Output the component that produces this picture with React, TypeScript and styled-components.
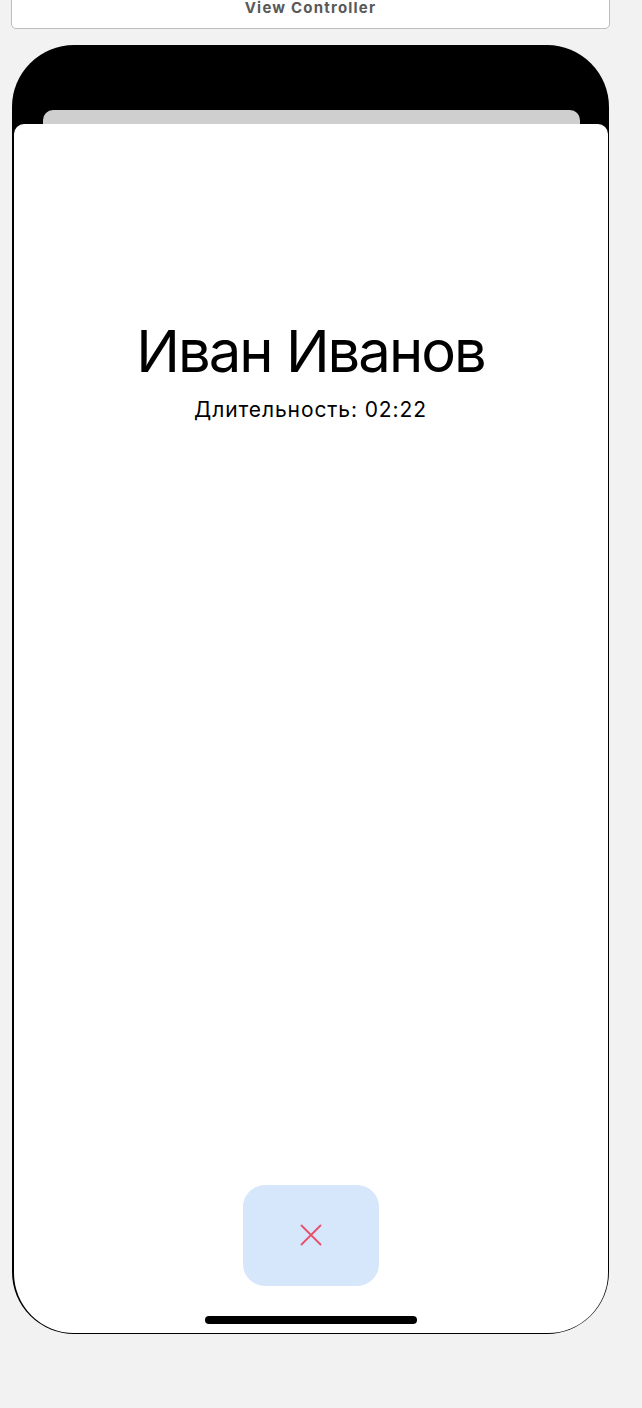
import React from "react";
import styled, { createGlobalStyle } from "styled-components";

const Global = createGlobalStyle`
  html, body { margin: 0; padding: 0; background: #f2f2f2; }
  body { font-family: Inter, "Noto Sans", sans-serif; }
`;

const Page = styled.div`
  width: 642px;
  height: 1408px;
  padding-left: 11px;
  box-sizing: border-box;
  display: flex;
  flex-direction: column;
  overflow: hidden;
`;

const HeaderBox = styled.div`
  width: 599px;
  height: 40px;
  margin-top: -11px;
  box-sizing: border-box;
  background: #fff;
  border: 1px solid #bdbdbd;
  border-radius: 5px;
  display: flex;
  align-items: flex-end;
  justify-content: center;
  padding-bottom: 14px;
  font-family: Inter, "Liberation Sans", sans-serif;
  font-weight: 700;
  font-size: 15px;
  letter-spacing: 1.2px;
  color: #595959;
  line-height: 12px;
`;

const Phone = styled.div`
  margin-top: 16px;
  margin-left: 1px;
  width: 597px;
  height: 1289px;
  box-sizing: border-box;
  background: #000;
  border-radius: 62px;
  padding: 0 1.5px 1.5px;
  display: flex;
  flex-direction: column;
`;

const Status = styled.div`
  height: 65px;
  flex: none;
`;

const BackCard = styled.div`
  height: 14px;
  flex: none;
  margin: 0 28px 0 29px;
  background: #cfcfcf;
  border-radius: 10px 10px 0 0;
`;

const Sheet = styled.div`
  flex: 1;
  background: #fff;
  border-radius: 10px 10px 60px 60px;
  display: flex;
  flex-direction: column;
  align-items: center;
  padding-top: 195px;
  box-sizing: border-box;
`;

const Name = styled.div`
  font-size: 58px;
  line-height: 64px;
  color: #000;
  font-weight: 400;
  letter-spacing: -2px;
`;

const Duration = styled.div`
  margin-top: 15px;
  font-size: 21px;
  line-height: 24px;
  letter-spacing: 0.9px;
  color: #000;
`;

const Spacer = styled.div`
  flex: 1;
`;

const CloseButton = styled.button`
  width: 136px;
  height: 101px;
  border: none;
  border-radius: 22px;
  background: #d6e6fb;
  display: flex;
  align-items: center;
  justify-content: center;
  padding: 0;
`;

const HomeIndicator = styled.div`
  width: 212px;
  height: 8px;
  margin: 30px 0 9px;
  border-radius: 4px;
  background: #000;
`;

export default function App() {
  return (
    <>
      <Global />
      <Page>
        <HeaderBox>View Controller</HeaderBox>
        <Phone>
          <Status />
          <BackCard />
          <Sheet>
            <Name>Иван Иванов</Name>
            <Duration>Длительность: 02:22</Duration>
            <Spacer />
            <CloseButton aria-label="Закрыть">
              <svg width="22" height="22" viewBox="0 0 22 22">
                <path d="M1.5 1.5 L20.5 20.5 M20.5 1.5 L1.5 20.5" stroke="#e8506a" strokeWidth="1.8" strokeLinecap="round" fill="none" />
              </svg>
            </CloseButton>
            <HomeIndicator />
          </Sheet>
        </Phone>
      </Page>
    </>
  );
}
